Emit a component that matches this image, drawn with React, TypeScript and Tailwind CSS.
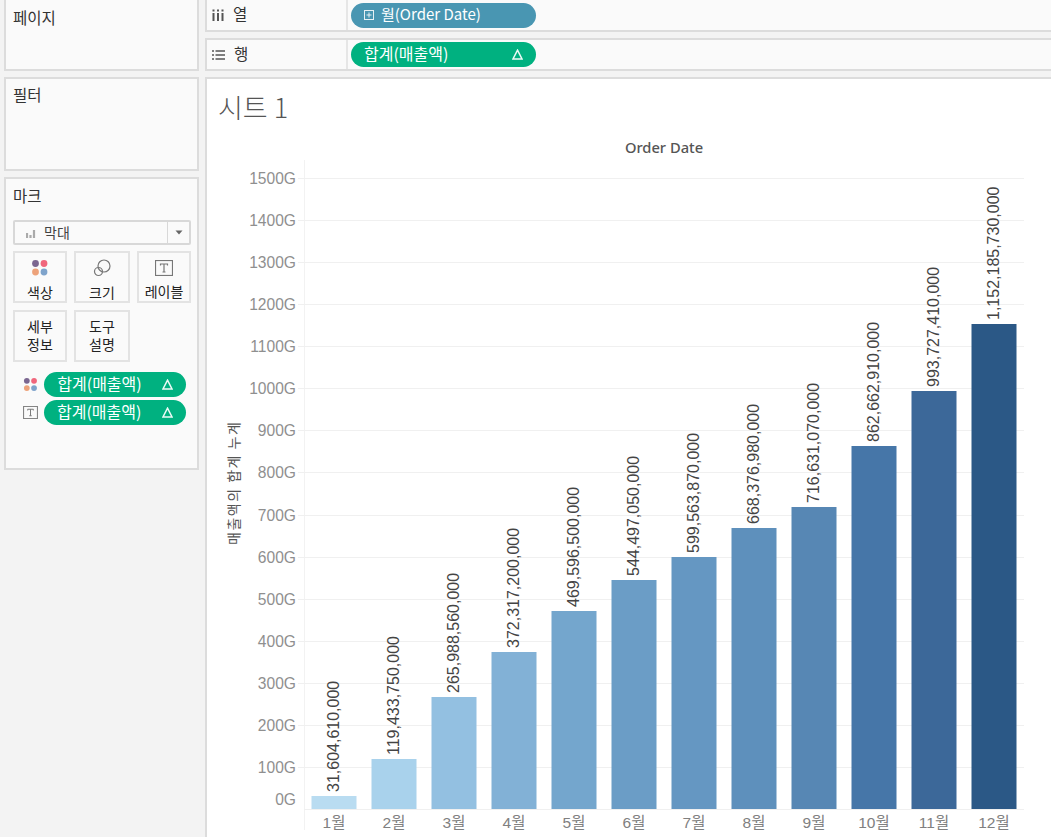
import React from "react";

const font = { fontFamily: '"Noto Sans CJK KR","Noto Sans",sans-serif' };
const bars: [string, number, string, string][] = [
  ["1월", 796, "31,604,610,000", "#b9dcf1"],
  ["2월", 759, "119,433,750,000", "#a9d2ec"],
  ["3월", 697, "265,988,560,000", "#93c0e1"],
  ["4월", 652, "372,317,200,000", "#82b1d6"],
  ["5월", 611, "469,596,500,000", "#74a6cd"],
  ["6월", 580, "544,497,050,000", "#6b9dc6"],
  ["7월", 557, "599,563,870,000", "#6597c2"],
  ["8월", 528, "668,376,980,000", "#5e90bc"],
  ["9월", 507, "716,631,070,000", "#5787b4"],
  ["10월", 446, "862,662,910,000", "#4676a8"],
  ["11월", 391, "993,727,410,000", "#3c6899"],
  ["12월", 324, "1,152,185,730,000", "#2b5886"],
];
const BASE = 809;
const ticks = Array.from({ length: 16 }, (_, i) => i * 100);

function Dots({ s = 1 }: { s?: number }) {
  return (
    <svg width={18 * s} height={18 * s} viewBox="0 0 18 18">
      <circle cx="4.5" cy="4.5" r="3.4" fill="#7b6690" />
      <circle cx="13" cy="4.5" r="3.4" fill="#f0667c" />
      <circle cx="4.5" cy="13" r="3.4" fill="#eda27a" />
      <circle cx="13" cy="13" r="3.4" fill="#7ea3cb" />
    </svg>
  );
}
function TBox({ size = 18 }: { size?: number }) {
  return (
    <svg width={size} height={size - 2} viewBox="0 0 18 16">
      <rect x="0.5" y="0.5" width="17" height="15" fill="none" stroke="#777" strokeWidth="1.2" />
      <path d="M5.5 5.5V4H12.5V5.5M9 4V12M7.5 12H10.5" fill="none" stroke="#777" strokeWidth="1.2" />
    </svg>
  );
}
function Pill({ text, w, bg, icon }: { text: string; w: string; bg: string; icon?: boolean }) {
  return (
    <div className={`${w} ${bg} h-[25px] rounded-full flex items-center text-white pl-[13px] pr-[13px] justify-between leading-none ${icon ? "text-[15px]" : "text-[16px]"}`}>
      <span className="flex items-center gap-[7px]">
        {icon && (
          <svg width="10" height="10" viewBox="0 0 10 10">
            <rect x="0.5" y="0.5" width="9" height="9" fill="none" stroke="#e6f0f4" />
            <path d="M2.5 5H7.5M5 2.5V7.5" stroke="#e6f0f4" />
          </svg>
        )}
        <span className="pb-[3px]">{text}</span>
      </span>
      {!icon && (
        <svg width="11" height="11" viewBox="0 0 11 11">
          <path d="M5.5 1.2L10 10H1Z" fill="none" stroke="#eafaf5" strokeWidth="1.5" />
        </svg>
      )}
    </div>
  );
}
function Card({ children, wrap = "w-[54px]" }: { children: React.ReactNode; wrap?: string }) {
  return (
    <div className={`h-[52px] border-2 border-[#e3e3e3] bg-[#fafafa] flex flex-col items-center justify-center text-[14px] text-[#222] leading-[18px] ${wrap}`}>
      {children}
    </div>
  );
}

export default function App() {
  return (
    <div className="w-[1051px] h-[837px] overflow-hidden bg-[#f3f3f3] flex" style={font}>
      <div className="w-[195px] ml-[4px] flex flex-col gap-[6px] shrink-0">
        <div className="h-[71px] bg-[#fafafa] border-2 border-t-0 border-[#dcdcdc] pl-[7px] pt-[8px] text-[15.5px] leading-[18px] text-[#333]">페이지</div>
        <div className="h-[94px] bg-[#fafafa] border-2 border-[#dcdcdc] pl-[7px] pt-[6px] text-[15.5px] leading-[18px] text-[#333]">필터</div>
        <div className="h-[293px] bg-[#fafafa] border-2 border-[#dcdcdc] pl-[7px] pt-[7px] text-[15.5px] leading-[18px] text-[#333]">
          <div>마크</div>
          <div className="mt-[16px] w-[178px] h-[25px] border-2 border-[#d8d8d8] rounded-[2px] bg-[#fafafa] flex items-center">
            <div className="flex-1 flex items-center gap-[8px] pl-[11px] text-[14px] text-[#444]">
              <svg width="10" height="10" viewBox="0 0 10 10"><path d="M1 5V10M4.5 7V10M8 2V10" stroke="#aaa" strokeWidth="2.2" /></svg>
              <span className="pb-[2px]">막대</span>
            </div>
            <div className="w-[22px] h-full border-l border-[#d8d8d8] flex items-center justify-center">
              <svg width="8" height="5" viewBox="0 0 8 5"><path d="M0.5 0.5H7.5L4 4.5Z" fill="#666" /></svg>
            </div>
          </div>
          <div className="mt-[6px] flex gap-[7px] w-[178px]">
            <Card wrap="w-[54px] pt-[6px]"><Dots /><span className="mt-[6px]">색상</span></Card>
            <Card wrap="w-[56px] pt-[6px]">
              <svg width="18" height="18" viewBox="0 0 18 18" fill="none" stroke="#777" strokeWidth="1.2"><circle cx="11" cy="7" r="6" /><circle cx="5.5" cy="12.5" r="4" /></svg>
              <span className="mt-[6px]">크기</span>
            </Card>
            <Card wrap="w-[54px] pt-[6px]"><TBox /><span className="mt-[6px]">레이블</span></Card>
          </div>
          <div className="mt-[7px] flex gap-[7px]">
            <Card wrap="w-[54px] pb-[2px]"><span>세부</span><span>정보</span></Card>
            <Card wrap="w-[56px] pb-[2px]"><span>도구</span><span>설명</span></Card>
          </div>
          <div className="mt-[10px] flex flex-col gap-[3px]">
            <div className="flex items-center gap-[6px] pl-[10px]"><Dots s={0.85} /><Pill text="합계(매출액)" w="w-[142px]" bg="bg-[#00b180]" /></div>
            <div className="flex items-center gap-[6px] pl-[10px]"><span className="w-[15px] flex"><TBox size={15} /></span><Pill text="합계(매출액)" w="w-[142px]" bg="bg-[#00b180]" /></div>
          </div>
        </div>
      </div>
      <div className="flex-1 ml-[6px] flex flex-col min-w-0">
        <div className="h-[32px] bg-[#fafafa] border-b-2 border-l-2 border-[#dcdcdc] flex">
          <div className="w-[141px] border-r-2 border-[#e6e6e6] flex items-center pl-[5px] gap-[9px] text-[15.5px] text-[#333]">
            <svg width="12" height="12" viewBox="0 0 12 12"><path d="M1.5 4V12M6 4V12M10.5 4V12" stroke="#555" strokeWidth="2" /><path d="M1.5 0.5V2.5M6 0.5V2.5M10.5 0.5V2.5" stroke="#555" strokeWidth="2" /></svg>
            <span className="pb-[2px]">열</span>
          </div>
          <div className="pl-[3px] flex items-center"><Pill text="월(Order Date)" w="w-[185px]" bg="bg-[#4996b2]" icon /></div>
        </div>
        <div className="mt-[6px] h-[33px] bg-[#fafafa] border-y-2 border-l-2 border-[#dcdcdc] flex">
          <div className="w-[141px] border-r-2 border-[#e6e6e6] flex items-center pl-[5px] gap-[9px] text-[15.5px] text-[#333]">
            <svg width="13" height="10" viewBox="0 0 13 10"><path d="M3.5 1H13M3.5 5H13M3.5 9H13M0 1H2M0 5H2M0 9H2" stroke="#555" strokeWidth="1.6" /></svg>
            <span className="pb-[2px]">행</span>
          </div>
          <div className="pl-[3px] flex items-center"><Pill text="합계(매출액)" w="w-[185px]" bg="bg-[#00b180]" /></div>
        </div>
        <div className="mt-[6px] flex-1 bg-white border-t-2 border-l-2 border-[#dcdcdc] relative min-h-0">
          <div className="pl-[11px] pt-[12px] text-[27px] leading-[32px] text-[#555] font-light">시트 1</div>
          <svg className="absolute left-[-207px] top-[-79px]" width="1051" height="837" viewBox="0 0 1051 837">
            <line x1="304.5" y1="160" x2="304.5" y2="830" stroke="#f2f2f2" />
            <line x1="304" y1="809.5" x2="1024" y2="809.5" stroke="#f0f0f0" />
            {ticks.map((t) => {
              const y = BASE - (t / 100) * 42.07;
              return (
                <g key={t}>
                  {t > 0 && <line x1="298" y1={Math.round(y) + 0.5} x2="1024" y2={Math.round(y) + 0.5} stroke="#f0f0f0" />}
                  <text x="296" y={t === 0 ? 804.5 : y + 6} textAnchor="end" fontSize="15.6" fill="#8f8f8f" style={{ fontFamily: '"Liberation Sans",sans-serif' }}>{t}G</text>
                </g>
              );
            })}
            {bars.map(([m, top, label, c], i) => {
              const x = 311.5 + i * 60;
              return (
                <g key={m}>
                  <rect x={x} y={top} width="45" height={BASE - top} fill={c} />
                  <text x={x + 22.5} y={827.5} textAnchor="middle" fontSize="15.5" fill="#808080" style={{ fontFamily: '"Liberation Sans","Noto Sans CJK KR",sans-serif' }}>{m}</text>
                  <text transform={`translate(${x + 27.5},${top - 4}) rotate(-90)`} fontSize="16" fill="#444" style={{ fontFamily: '"Liberation Sans",sans-serif' }}>{label}</text>
                </g>
              );
            })}
            <text x="664" y="153" textAnchor="middle" fontSize="14.7" fontWeight="500" fill="#555" style={{ fontFamily: '"Noto Sans",sans-serif' }}>Order Date</text>
            <text transform="translate(238.5,545) rotate(-90)" fontSize="14" letterSpacing="1.5" fill="#555" style={{ fontFamily: '"Noto Sans CJK KR",sans-serif' }}>매출액의 합계 누계</text>
          </svg>
        </div>
      </div>
    </div>
  );
}
